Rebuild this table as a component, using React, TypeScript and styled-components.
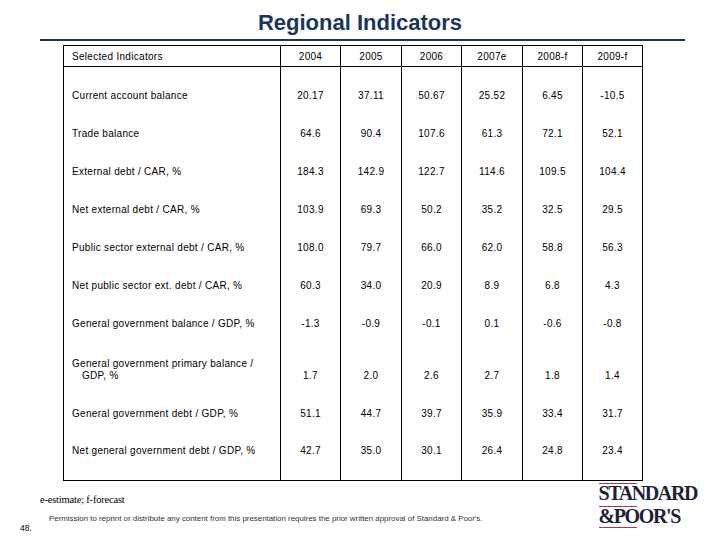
import React from 'react';
import styled, { createGlobalStyle } from 'styled-components';

const GlobalStyle = createGlobalStyle`
  html, body {
    margin: 0;
    padding: 0;
    background: #fff;
  }
  body {
    font-family: 'Liberation Sans', Arial, sans-serif;
  }
`;

const Page = styled.div`
  width: 720px;
  height: 540px;
  overflow: hidden;
  background: #fff;
  display: flex;
  flex-direction: column;
`;
const Title = styled.h1`
  margin: 0;
  padding-top: 10px;
  height: 26px;
  line-height: 26px;
  text-align: center;
  font-family: 'Liberation Sans Narrow', 'Liberation Sans', Arial, sans-serif;
  font-weight: bold;
  font-size: 22px;
  color: #1b365a;
`;
const Rule = styled.div`
  height: 2px;
  margin: 3px 35px 0 40px;
  background: #1b384a;
`;
const Table = styled.table`
  margin: 4px 0 0 63px;
  width: 580px;
  border-collapse: collapse;
  table-layout: fixed;
  border: 1px solid #000;
  font-size: 10px;
  letter-spacing: 0.3px;
  color: #000;
`;
const Col = styled.col<{ $w: number }>`
  width: ${(p) => p.$w}px;
`;
const HeadCell = styled.th<{ $left?: boolean }>`
  height: 20px;
  padding: 0 8px;
  font-weight: normal;
  text-align: ${(p) => (p.$left ? 'left' : 'center')};
  vertical-align: middle;
  border: 1px solid #000;
`;
const Row = styled.tr<{ $tall?: boolean }>`
  height: ${(p) => (p.$tall ? 52 : 38)}px;

  &:first-child,
  &:last-child {
    height: 48px;
  }
  &:last-child td {
    padding-bottom: 23px;
  }
`;
const Cell = styled.td`
  padding: 0 8px 13px;
  line-height: 12px;
  text-align: center;
  vertical-align: bottom;
  border-left: 1px solid #000;
  border-right: 1px solid #000;
`;
const LabelCell = styled(Cell)`
  text-align: left;
  padding-left: 18px;
  text-indent: -10px;
  white-space: pre-line;
`;
const Footer = styled.div`
  flex: 1;
  display: flex;
  padding-top: 2px;
`;
const Notes = styled.div`
  padding-left: 20px;
  display: flex;
  flex-direction: column;
`;
const Legend = styled.div`
  margin: 11px 0 0 20px;
  font-family: 'Liberation Serif', 'Times New Roman', serif;
  font-size: 10.5px;
  line-height: 12px;
  letter-spacing: -0.2px;
  color: #000;
`;
const PermissionRow = styled.div`
  display: flex;
  margin-top: 8px;
`;
const PageNum = styled.div`
  width: 29px;
  margin-top: 9px;
  font-size: 8.5px;
  line-height: 10px;
  color: #000;
`;
const Permission = styled.div`
  font-size: 7.9px;
  line-height: 10px;
  color: #333;
`;
const Logo = styled.div`
  margin-left: auto;
  margin-right: 23px;
  display: flex;
  flex-direction: column;
  align-items: flex-start;
`;
const LogoRule = styled.div<{ $gap: number }>`
  width: 38px;
  height: 1px;
  margin-top: ${(p) => p.$gap}px;
  background: #a33a4a;
`;
const LogoWord = styled.div`
  font-family: 'Liberation Serif', 'Times New Roman', serif;
  font-weight: bold;
  font-size: 20px;
  line-height: 18px;
  letter-spacing: -1.4px;
  color: #1f2235;
`;

const years = ['2004', '2005', '2006', '2007e', '2008-f', '2009-f'];
const widths = [60, 61, 60, 61, 60, 60];

const rows: { label: string; values: string[]; tall?: boolean }[] = [
  { label: 'Current account balance', values: ['20.17', '37.11', '50.67', '25.52', '6.45', '-10.5'] },
  { label: 'Trade balance', values: ['64.6', '90.4', '107.6', '61.3', '72.1', '52.1'] },
  { label: 'External debt / CAR, %', values: ['184.3', '142.9', '122.7', '114.6', '109.5', '104.4'] },
  { label: 'Net external debt / CAR, %', values: ['103.9', '69.3', '50.2', '35.2', '32.5', '29.5'] },
  { label: 'Public sector external debt / CAR, %', values: ['108.0', '79.7', '66.0', '62.0', '58.8', '56.3'] },
  { label: 'Net public sector ext. debt / CAR, %', values: ['60.3', '34.0', '20.9', '8.9', '6.8', '4.3'] },
  { label: 'General government balance / GDP, %', values: ['-1.3', '-0.9', '-0.1', '0.1', '-0.6', '-0.8'] },
  {
    label: 'General government primary balance /\nGDP, %',
    values: ['1.7', '2.0', '2.6', '2.7', '1.8', '1.4'],
    tall: true,
  },
  { label: 'General government debt / GDP, %', values: ['51.1', '44.7', '39.7', '35.9', '33.4', '31.7'] },
  { label: 'Net general government debt / GDP, %', values: ['42.7', '35.0', '30.1', '26.4', '24.8', '23.4'] },
];

export default function App() {
  return (
    <>
      <GlobalStyle />
      <Page>
        <Title>Regional Indicators</Title>
        <Rule />
        <Table>
          <colgroup>
            <Col $w={217} />
            {widths.map((w, i) => (
              <Col key={i} $w={w} />
            ))}
          </colgroup>
          <thead>
            <tr>
              <HeadCell $left>Selected Indicators</HeadCell>
              {years.map((y) => (
                <HeadCell key={y}>{y}</HeadCell>
              ))}
            </tr>
          </thead>
          <tbody>
            {rows.map((r) => (
              <Row key={r.label} $tall={r.tall}>
                <LabelCell>{r.label}</LabelCell>
                {r.values.map((v, i) => (
                  <Cell key={i}>{v}</Cell>
                ))}
              </Row>
            ))}
          </tbody>
        </Table>
        <Footer>
          <Notes>
            <Legend>e-estimate; f-forecast</Legend>
            <PermissionRow>
              <PageNum>48.</PageNum>
              <Permission>
                Permission to reprint or distribute any content from this presentation requires the prior
                written approval of Standard &amp; Poor's.
              </Permission>
            </PermissionRow>
          </Notes>
          <Logo>
            <LogoRule $gap={0} />
            <LogoWord>STANDARD</LogoWord>
            <LogoRule $gap={4} />
            <LogoWord>&amp;POOR'S</LogoWord>
            <LogoRule $gap={2} />
          </Logo>
        </Footer>
      </Page>
    </>
  );
}
